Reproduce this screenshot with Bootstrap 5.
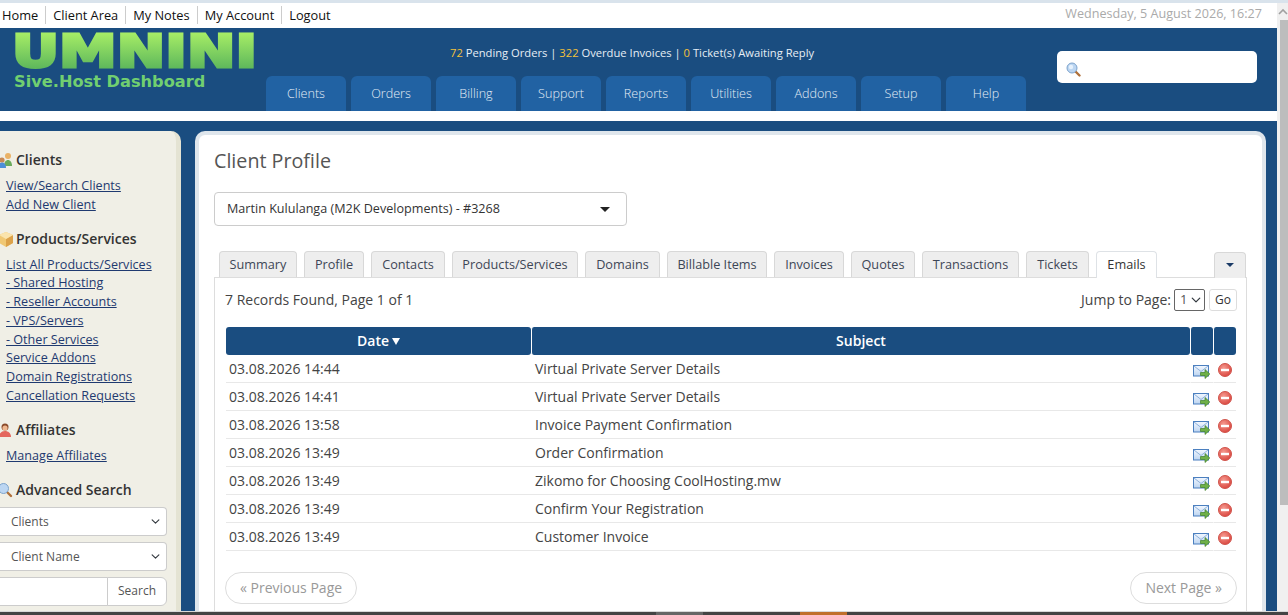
<!DOCTYPE html>
<html lang="en"><head><meta charset="utf-8"><title>Client Profile</title>
<link href="https://cdn.jsdelivr.net/npm/bootstrap@5.3.0/dist/css/bootstrap.min.css" rel="stylesheet">
<style>
html,body{height:100%;margin:0}
body{font-family:"Open Sans",sans-serif;font-size:13px;color:#333;background:#1a4d80;overflow:hidden;border-top:3px solid #d9e3ec}
.desk{min-height:0}
.sbar{width:11px;background:#f0f0f0;flex:none}
.sbar-arrow{height:14px;display:block;margin:2px 0 0 1px}
.sbar-thumb{height:485px;margin:1px 0 0 3px;background:#bdbdbd}
.taskbar{height:3px;background:#444;flex:none;box-shadow:0 -1px 0 #d8d8d8}
.tb-a{width:47px;margin-left:656px;background:#666}
.tb-b{width:47px;margin-left:97px;background:#c0702c}
.topnav{height:25px;background:#fff;padding:0 15px 2px 0}
.toplinks a{color:#111;text-decoration:none;font-size:12.8px;font-weight:500;padding:0 7px;border-left:1px solid #ccc;line-height:18px;display:block}
.toplinks li:first-child a{border-left:0;padding-left:2px}
.datetxt{color:#aaa;font-size:12.6px}
.headband{height:83px;background:#1a4d80}
.logo{width:266px;flex:none;padding-left:14px}
.logo-art{display:block;overflow:visible;height:42px}
.logo-art text{font-family:"DejaVu Sans",sans-serif;font-weight:700;font-size:45px}
.logo-sub{font-family:"DejaVu Sans",sans-serif;font-weight:700;font-size:16.2px;line-height:20px;color:#71cf70;white-space:nowrap;margin:2px 0 0}
.midcol{width:791px;flex:none}
.stats{height:48px;padding:17px 0 0 184px;font-size:11.2px;line-height:16px;color:#e6eef5;white-space:nowrap}
.stats b{font-weight:400;color:#f3c13a}
.menu{gap:5px}
.menu a{width:80px;height:35px;background:#2162a3;color:#e4edf6;border-radius:6px 6px 0 0;font-size:12.6px;font-weight:300;line-height:35px;text-align:center;text-decoration:none;display:block}
.qsearch{width:200px;height:32px;background:#fff;border-radius:5px;margin-top:23px;padding:8px 0 0 9px}
.whitegap{height:10px;background:#fff;flex:none}
.bodyrow{min-height:0;padding-top:10px}
.side{width:181px;flex:none;background:#f0efe6;border-right:5px solid #e4e3d3;border-radius:0 10px 0 0;padding:19px 9px 0 0}
.side-h{font-size:14px;font-weight:600;line-height:20px;color:#333;margin:0 0 7px 0;gap:3px}
.side-h svg{flex:none}
.side-l{padding-left:6px;margin:0 0 14.200px;line-height:18.75px}
.side-l a{color:#1f3a70;font-size:12.6px;display:block;width:max-content}
.side-sel{height:29px;font-size:12px;color:#555;border-radius:0 4px 4px 0;border-left:0;padding:2px 24px 0 11px;margin-bottom:6px;background-position:right 5px center;background-size:11px 9px;border-color:#ccc}
.side-grp{height:29px}
.side-grp input{border-left:0;border-radius:0;border-color:#ccc;height:29px}
.side-grp .btn{font-size:12px;background:#fff;border-color:#ccc;color:#555;width:60px;padding:0;flex:none}
.maincard{width:1071px;flex:none;margin-left:14px;background:#fff;border:4px solid #dfe6ec;border-bottom:0;border-radius:10px 10px 0 0;padding:12px 15px 0}
.ttl{font-size:19.700px;font-weight:400;line-height:28px;color:#555;margin:0 0 17px}
.picker{width:413px;height:34px;border:1px solid #ccc;border-radius:4px;padding:1px 16px 0 12px;font-size:12.6px;color:#333;margin-bottom:25px}
.caret-d{width:0;height:0;border:5px solid transparent;border-top-color:#222;border-bottom:0}
.tabsx{border-bottom:0;gap:7px;padding-left:5px;height:26px}
.tabsx .nav-link{height:26px;background:#eee;border:1px solid #d8d8d8;border-bottom:0;border-radius:4px 4px 0 0;padding:0;text-align:center;font-size:12.7px;line-height:25px;color:#3d4656;margin:0}
.tabsx .nav-link.active{background:#fff;height:27px;position:relative;z-index:1;color:#333}
.tabsx .nav-item:nth-child(1) .nav-link{width:78px}
.tabsx .nav-item:nth-child(2) .nav-link{width:60px}
.tabsx .nav-item:nth-child(3) .nav-link{width:74px}
.tabsx .nav-item:nth-child(4) .nav-link{width:126px}
.tabsx .nav-item:nth-child(5) .nav-link{width:75px}
.tabsx .nav-item:nth-child(6) .nav-link{width:100px}
.tabsx .nav-item:nth-child(7) .nav-link{width:70px}
.tabsx .nav-item:nth-child(8) .nav-link{width:64px}
.tabsx .nav-item:nth-child(9) .nav-link{width:97px}
.tabsx .nav-item:nth-child(10) .nav-link{width:63px}
.tabsx .nav-item:nth-child(11) .nav-link{width:61px}
.tabsx .more{margin-left:auto;margin-right:1px;width:32px;display:flex;align-items:center;justify-content:center}
.tabbox{border:1px solid #ddd;border-bottom:0;padding:10px 9px 0 10px;height:335px}
.rec{font-size:14px;line-height:24px;color:#444;height:39px}
.jump{font-size:14px;color:#444}
.jump-sel{width:31px;height:22px;border:1px solid #666;border-radius:2px;padding:0 0 0 5px;font-size:13px;background-position:right 3px center;background-size:10px;margin:0 4px 0 3px;color:#555}
.go{width:28px;height:22px;padding:0;font-size:12px;color:#333;background:#fff;border:1px solid #ddd;border-radius:3px;line-height:20px}
.grid{border-collapse:separate;border-spacing:0;width:1010px;table-layout:fixed;margin:0 0 0 1px}
.grid th{height:28px;background:#1a4d80;color:#fff;font-size:14px;font-weight:600;text-align:center;border:0;border-left:1px solid #fff;border-radius:3px;padding:0 0 2px;vertical-align:middle;box-shadow:none}
.grid th:first-child{border-left:0}
.grid td{height:28px;padding:0 0 0 3px;font-size:14px;color:#444;border-bottom:1px solid #e8e8e8;vertical-align:middle;box-shadow:none;line-height:25px}
.grid td:nth-child(2){padding-left:4px}
.grid td.ic{padding:7px 1px 0 0;text-align:center;border-left:1px solid #fff;line-height:0}
.grid td.ic+td.ic{padding:3px 1px 0 0}
.grid td svg{display:inline-block;vertical-align:middle}
.sortd{display:inline-block;width:0;height:0;border:4px solid transparent;border-top:7px solid #fff;border-bottom:0;margin-left:3px;vertical-align:1px}
.pager{margin-top:21px}
.pgbtn{height:32px;border:1px solid #ddd;border-radius:16px;font-size:14px;color:#999;background:#fff;padding:0 14px;line-height:30px}
</style></head>
<body class="d-flex flex-column">
<div class="desk d-flex flex-grow-1 overflow-hidden">
 <div class="flex-grow-1 d-flex flex-column overflow-hidden">
  <div class="topnav d-flex justify-content-between align-items-center flex-shrink-0">
   <ul class="toplinks list-unstyled d-flex m-0">
    <li><a href="#">Home</a></li><li><a href="#">Client Area</a></li><li><a href="#">My Notes</a></li><li><a href="#">My Account</a></li><li><a href="#">Logout</a></li>
   </ul>
   <div class="datetxt">Wednesday, 5 August 2026, 16:27</div>
  </div>
  <div class="headband d-flex flex-shrink-0">
   <div class="logo">
    <svg class="logo-art" width="240" height="42" viewBox="0 0 240 42"><defs><linearGradient id="lg" gradientUnits="userSpaceOnUse" x1="0" y1="4" x2="0" y2="40"><stop offset="0" stop-color="#a8ee66"/><stop offset="1" stop-color="#5fb85c"/></linearGradient></defs><text x="-2" y="38.500" textLength="245" lengthAdjust="spacingAndGlyphs" fill="url(#lg)" stroke="url(#lg)" stroke-width="3">UMNINI</text></svg>
    <div class="logo-sub">Sive.Host Dashboard</div>
   </div>
   <div class="midcol">
    <div class="stats"><b>72</b> Pending Orders | <b>322</b> Overdue Invoices | <b>0</b> Ticket(s) Awaiting Reply</div>
    <nav class="menu d-flex"><a href="#">Clients</a><a href="#">Orders</a><a href="#">Billing</a><a href="#">Support</a><a href="#">Reports</a><a href="#">Utilities</a><a href="#">Addons</a><a href="#">Setup</a><a href="#">Help</a></nav>
   </div>
   <div class="qsearch"><svg width="15" height="15" viewBox="0 0 15 15"><path d="M9.5 9.5l4 4" stroke="#b0703a" stroke-width="2.4" stroke-linecap="round"/><circle cx="6" cy="6" r="5" fill="#bcd6f2" stroke="#7da3cc"/><circle cx="5" cy="5" r="2.2" fill="#e6f1fc"/></svg></div>
  </div>
  <div class="whitegap"></div>
  <div class="bodyrow d-flex flex-grow-1 overflow-hidden">
   <aside class="side">
    <div class="side-h d-flex align-items-center"><svg width="13" height="16" viewBox="3 0 13 16"><circle cx="11" cy="4" r="3" fill="#eab266"/><path d="M7 14c0-4 2-6 4-6s4 2 4 6z" fill="#6aab5c"/><circle cx="5" cy="8" r="2.6" fill="#c98a55"/><path d="M1 16c0-4 2-5.500 4-5.500s4 1.500 4 5.500z" fill="#4d8fd8"/></svg>Clients</div>
    <ul class="side-l list-unstyled"><li><a href="#">View/Search Clients</a></li><li><a href="#">Add New Client</a></li></ul>
    <div class="side-h d-flex align-items-center"><svg width="13" height="16" viewBox="3 0 13 16"><path d="M9 1l7 3v8l-7 4-7-4V4z" fill="#f0c874"/><path d="M9 8l7-4v8l-7 4z" fill="#dca24a"/><path d="M9 1l7 3-7 4-7-4z" fill="#fae4ad"/></svg>Products/Services</div>
    <ul class="side-l list-unstyled"><li><a href="#">List All Products/Services</a></li><li><a href="#">- Shared Hosting</a></li><li><a href="#">- Reseller Accounts</a></li><li><a href="#">- VPS/Servers</a></li><li><a href="#">- Other Services</a></li><li><a href="#">Service Addons</a></li><li><a href="#">Domain Registrations</a></li><li><a href="#">Cancellation Requests</a></li></ul>
    <div class="side-h d-flex align-items-center"><svg width="13" height="16" viewBox="3 0 13 16"><circle cx="8" cy="5" r="3.500" fill="#8a4a2a"/><circle cx="8" cy="6" r="2.600" fill="#efb78f"/><path d="M2 15c0-4 3-6 6-6s6 2 6 6z" fill="#e4675e"/></svg>Affiliates</div>
    <ul class="side-l list-unstyled"><li><a href="#">Manage Affiliates</a></li></ul>
    <div class="side-h d-flex align-items-center"><svg width="13" height="16" viewBox="3 0 13 16"><path d="M10 10l4 4" stroke="#b0703a" stroke-width="2.400" stroke-linecap="round"/><circle cx="6.500" cy="6.500" r="5" fill="#bcd6f2" stroke="#7da3cc"/></svg>Advanced Search</div>
    <select class="form-select side-sel"><option>Clients</option></select>
    <select class="form-select side-sel"><option>Client Name</option></select>
    <div class="input-group side-grp"><input class="form-control" type="text" aria-label="Search term"><button class="btn" type="button">Search</button></div>
   </aside>
   <main class="maincard">
    <h1 class="ttl">Client Profile</h1>
    <div class="picker d-flex align-items-center justify-content-between"><span>Martin Kululanga (M2K Developments) - #3268</span><span class="caret-d"></span></div>
    <ul class="nav nav-tabs tabsx">
     <li class="nav-item"><a class="nav-link" href="#">Summary</a></li><li class="nav-item"><a class="nav-link" href="#">Profile</a></li><li class="nav-item"><a class="nav-link" href="#">Contacts</a></li><li class="nav-item"><a class="nav-link" href="#">Products/Services</a></li><li class="nav-item"><a class="nav-link" href="#">Domains</a></li><li class="nav-item"><a class="nav-link" href="#">Billable Items</a></li><li class="nav-item"><a class="nav-link" href="#">Invoices</a></li><li class="nav-item"><a class="nav-link" href="#">Quotes</a></li><li class="nav-item"><a class="nav-link" href="#">Transactions</a></li><li class="nav-item"><a class="nav-link" href="#">Tickets</a></li><li class="nav-item"><a class="nav-link active" href="#">Emails</a></li>
     <li class="nav-item more"><a class="nav-link w-100 d-flex align-items-center justify-content-center p-0" href="#" aria-label="More"><span class="caret-d" style="border-top-color:#1a3a66;border-width:4px;border-bottom:0"></span></a></li>
    </ul>
    <div class="tabbox">
     <div class="rec d-flex justify-content-between align-items-start">
      <span>7 Records Found, Page 1 of 1</span>
      <span class="jump d-flex align-items-center">Jump to Page:<select class="form-select jump-sel"><option>1</option></select><button class="btn go" type="button">Go</button></span>
     </div>
     <table class="table grid">
      <colgroup><col style="width:305px"><col style="width:659px"><col style="width:23px"><col style="width:23px"></colgroup>
      <thead><tr><th>Date<span class="sortd"></span></th><th>Subject</th><th></th><th></th></tr></thead>
      <tbody id="rows"></tbody>
     </table>
     <div class="pager d-flex justify-content-between"><span class="pgbtn">« Previous Page</span><span class="pgbtn">Next Page »</span></div>
    </div>
   </main>
  </div>
 </div>
 <div class="sbar"><svg class="sbar-arrow" width="10" height="12" viewBox="0 0 10 12"><path d="M1 8l4-4 4 4" fill="none" stroke="#a0a0a0" stroke-width="1.600"/></svg><div class="sbar-thumb"></div></div>
</div>
<div class="taskbar d-flex"><div class="tb-a"></div><div class="tb-b"></div></div>
<svg width="0" height="0" class="position-absolute"><defs><radialGradient id="rd" cx=".4" cy=".35" r=".7"><stop offset="0" stop-color="#f59a90"/><stop offset="1" stop-color="#d9443c"/></radialGradient><linearGradient id="ml" x1="0" y1="0" x2="0" y2="1"><stop offset="0" stop-color="#f3f8ff"/><stop offset="1" stop-color="#bcd4f0"/></linearGradient></defs></svg>
<script src="https://cdn.jsdelivr.net/npm/bootstrap@5.3.0/dist/js/bootstrap.bundle.min.js"></script>
<script>
const mail='<svg width="17" height="14" viewBox="0 0 17 14"><rect x=".5" y=".5" width="15" height="10.500" fill="url(#ml)" stroke="#4b7fbf"/><path d="M1 1l7 5.500 7-5.500" fill="none" stroke="#8fb2dc"/><path d="M7.500 7.500h4.500V4.500l4.800 4.500-4.800 4.500V10.500H7.500z" fill="#6fb048" stroke="#3f7f2a" stroke-width=".7"/></svg>';
const del='<svg width="14" height="14" viewBox="0 0 14 14"><circle cx="7" cy="7" r="6.500" fill="url(#rd)" stroke="#d0544c"/><rect x="3" y="5.800" width="8" height="2.400" fill="#fff"/></svg>';
const data=[["03.08.2026 14:44","Virtual Private Server Details"],["03.08.2026 14:41","Virtual Private Server Details"],["03.08.2026 13:58","Invoice Payment Confirmation"],["03.08.2026 13:49","Order Confirmation"],["03.08.2026 13:49","Zikomo for Choosing CoolHosting.mw"],["03.08.2026 13:49","Confirm Your Registration"],["03.08.2026 13:49","Customer Invoice"]];
document.getElementById('rows').innerHTML=data.map(r=>`<tr><td>${r[0]}</td><td>${r[1]}</td><td class="ic">${mail}</td><td class="ic">${del}</td></tr>`).join('');
</script>
</body></html>
